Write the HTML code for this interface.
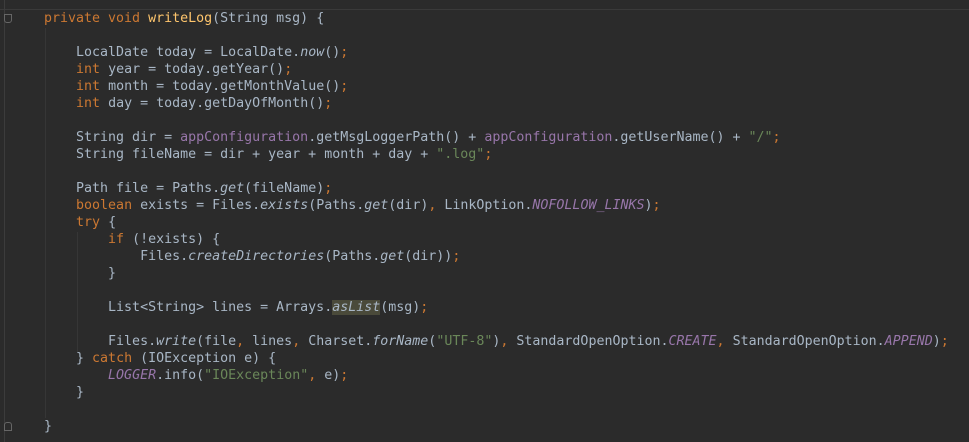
<!DOCTYPE html>
<html><head><style>
html,body{margin:0;padding:0;}
body{width:969px;height:442px;background:#2b2b2b;position:relative;overflow:hidden;}
.top{position:absolute;left:0;top:9px;width:969px;height:1px;background:#3a3a3a;}
.gl{position:absolute;left:4px;top:0;width:1px;height:442px;background:#3c3c3c;}
.guide{position:absolute;width:1px;background:#363636;}
pre{position:absolute;left:44px;top:10px;margin:0;font-family:"DejaVu Sans Mono","Liberation Mono",monospace;font-size:13.3px;line-height:17px;color:#a9b7c6;}
.k{color:#cc7832}.m{color:#ffc66d}.s{color:#6a8759}.f{color:#9876aa;font-style:italic}.i{font-style:italic}
.hl{background:#4a4a3a}
.fold{position:absolute;left:4px;width:8px;height:9px;border:1px solid #666;border-radius:0 0 3px 3px;box-sizing:border-box;}
</style></head><body>
<div class="top"></div>
<div class="gl"></div>
<div class="fold" style="top:14px"></div>
<div class="fold" style="top:422px;border-radius:3px 3px 0 0"></div>
<div class="guide" style="left:45px;top:28px;height:390px"></div>
<div class="guide" style="left:77px;top:232px;height:120px"></div>
<pre><span class="k">private void </span><span class="m">writeLog</span>(String msg) {

    LocalDate today = LocalDate.<span class="i">now</span>()<span class="k">;</span>
    <span class="k">int </span>year = today.getYear()<span class="k">;</span>
    <span class="k">int </span>month = today.getMonthValue()<span class="k">;</span>
    <span class="k">int </span>day = today.getDayOfMonth()<span class="k">;</span>

    String dir = <span class="f" style="font-style:normal">appConfiguration</span>.getMsgLoggerPath() + <span class="f" style="font-style:normal">appConfiguration</span>.getUserName() + <span class="s">"/"</span><span class="k">;</span>
    String fileName = dir + year + month + day + <span class="s">".log"</span><span class="k">;</span>

    Path file = Paths.<span class="i">get</span>(fileName)<span class="k">;</span>
    <span class="k">boolean </span>exists = Files.<span class="i">exists</span>(Paths.<span class="i">get</span>(dir)<span class="k">, </span>LinkOption.<span class="f">NOFOLLOW_LINKS</span>)<span class="k">;</span>
    <span class="k">try </span>{
        <span class="k">if </span>(!exists) {
            Files.<span class="i">createDirectories</span>(Paths.<span class="i">get</span>(dir))<span class="k">;</span>
        }

        List&lt;String&gt; lines = Arrays.<span class="i hl">asList</span>(msg)<span class="k">;</span>

        Files.<span class="i">write</span>(file<span class="k">, </span>lines<span class="k">, </span>Charset.<span class="i">forName</span>(<span class="s">"UTF-8"</span>)<span class="k">, </span>StandardOpenOption.<span class="f">CREATE</span><span class="k">, </span>StandardOpenOption.<span class="f">APPEND</span>)<span class="k">;</span>
    } <span class="k">catch </span>(IOException e) {
        <span class="f">LOGGER</span>.info(<span class="s">"IOException"</span><span class="k">, </span>e)<span class="k">;</span>
    }

}</pre>
</body></html>
